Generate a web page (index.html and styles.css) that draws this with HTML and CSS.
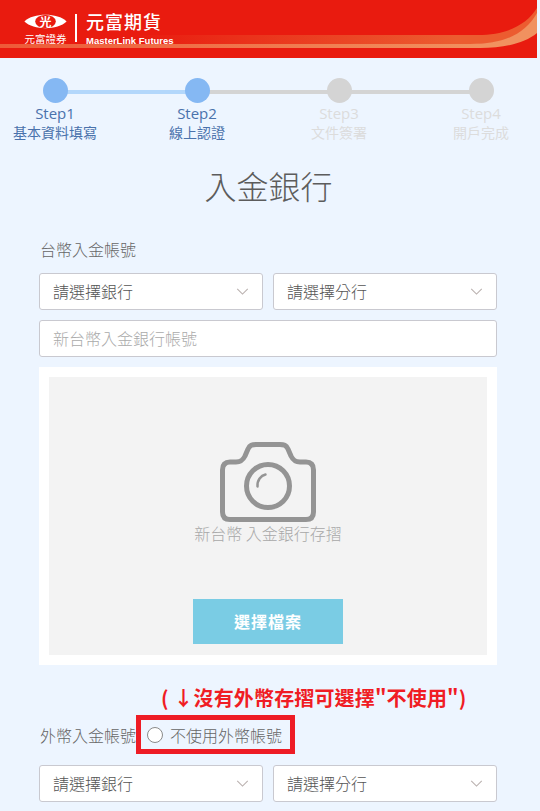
FILE: index.html
```html
<!DOCTYPE html>
<html lang="zh-Hant">
<head>
<meta charset="utf-8">
<title>入金銀行</title>
<link rel="stylesheet" href="styles.css">
</head>
<body>
<div class="page">
  <header class="header">
    <svg class="swoosh" viewBox="0 0 537 58" preserveAspectRatio="none" aria-hidden="true">
      <defs>
        <linearGradient id="bandDark" gradientUnits="userSpaceOnUse" x1="0" y1="0" x2="537" y2="0">
          <stop offset="0.25" stop-color="#e91b0f"/>
          <stop offset="0.85" stop-color="#ec5c30"/>
        </linearGradient>
        <linearGradient id="bandLight" gradientUnits="userSpaceOnUse" x1="0" y1="0" x2="537" y2="0">
          <stop offset="0" stop-color="#ee5a38"/>
          <stop offset="0.9" stop-color="#f1915f"/>
        </linearGradient>
      </defs>
      <path d="M0 35 H478 C508 35 527 24 537 8 V20 C525 36 505 44 470 44 H0 Z" fill="url(#bandDark)"/>
      <path d="M0 44 H470 C505 44 525 34 537 13 V33 C525 43 505 48 480 48 H0 Z" fill="url(#bandLight)"/>
    </svg>
    <div class="brand">
      <div class="mark">
        <svg class="oval" viewBox="0 0 46 16" aria-hidden="true">
          <path d="M0.5 8 C10 -1.5 36 -1.5 45.5 8 C36 17.5 10 17.5 0.5 8 Z" fill="#fff"/>
          <ellipse cx="23" cy="8" rx="11" ry="7" fill="#e91b0f"/>
        </svg>
        <span class="oval-char">光</span>
        <span class="mark-name">元富證券</span>
      </div>
      <div class="divider"></div>
      <div class="brand-text">
        <span class="brand-zh">元富期貨</span>
        <span class="brand-en">MasterLink Futures</span>
      </div>
    </div>
  </header>

  <ol class="steps">
    <li class="step done"><span class="dot"></span><span class="step-no">Step1</span><span class="step-name">基本資料填寫</span></li>
    <li class="step active"><span class="dot"></span><span class="step-no">Step2</span><span class="step-name">線上認證</span></li>
    <li class="step"><span class="dot"></span><span class="step-no">Step3</span><span class="step-name">文件簽署</span></li>
    <li class="step last"><span class="dot"></span><span class="step-no">Step4</span><span class="step-name">開戶完成</span></li>
  </ol>

  <h1 class="title">入金銀行</h1>

  <main class="form">
    <div class="field-label">台幣入金帳號</div>
    <div class="select-row">
      <div class="select">請選擇銀行<svg class="chev" viewBox="0 0 14 8"><path d="M1 1l6 6 6-6"/></svg></div>
      <div class="select">請選擇分行<svg class="chev" viewBox="0 0 14 8"><path d="M1 1l6 6 6-6"/></svg></div>
    </div>
    <div class="input">新台幣入金銀行帳號</div>
    <div class="upload">
      <div class="upload-inner">
        <svg class="camera" viewBox="0 0 96 80" aria-hidden="true">
          <path d="M10 20 H16 C21 20 23 18 25 14 L28 7 C30 3 32 2.500 36 2.500 H60 C64 2.500 66 3 68 7 L71 14 C73 18 75 20 80 20 H86 C91 20 93.500 23 93.500 28 V70 C93.500 75 91 77.500 86 77.500 H10 C5 77.500 2.500 75 2.500 70 V28 C2.500 23 5 20 10 20 Z"/>
          <circle cx="48" cy="44" r="21.500"/>
          <path class="glint" d="M37.500 44.500 C37 38 41 33.500 45.500 32.500"/>
        </svg>
        <div class="upload-text">新台幣 入金銀行存摺</div>
        <div class="upload-btn">選擇檔案</div>
      </div>
    </div>
    <div class="note">( ↓沒有外幣存摺可選擇"不使用")</div>
    <div class="foreign">
      <span class="foreign-label">外幣入金帳號</span>
      <label class="opt"><span class="radio"></span>不使用外幣帳號</label>
    </div>
    <div class="select-row">
      <div class="select">請選擇銀行<svg class="chev" viewBox="0 0 14 8"><path d="M1 1l6 6 6-6"/></svg></div>
      <div class="select">請選擇分行<svg class="chev" viewBox="0 0 14 8"><path d="M1 1l6 6 6-6"/></svg></div>
    </div>
  </main>
</div>
</body>
</html>
```

FILE: styles.css
```css
* { box-sizing: border-box; }
html, body { margin: 0; padding: 0; background: #edf5ff; }
body {
  font-family: "Noto Sans CJK TC", "Noto Sans", sans-serif;
  color: #555;
  height: 811px;
  overflow: hidden;
}
.page { width: 537px; }

.header {
  position: relative;
  height: 58px;
  background: #e91b0f;
  overflow: hidden;
}
.swoosh { position: absolute; inset: 0; width: 100%; height: 100%; }
.brand {
  position: relative;
  display: flex;
  align-items: flex-start;
  padding: 14px 0 0 23px;
  color: #fff;
}
.mark { position: relative; width: 45px; display: flex; flex-direction: column; align-items: center; }
.oval { width: 45px; height: 15px; display: block; }
.oval-char {
  position: absolute;
  top: 0; left: 0; right: 0;
  text-align: center;
  font-size: 12px;
  line-height: 15px;
  font-weight: 700;
  color: #fff;
}
.mark-name { font-size: 10.5px; line-height: 12px; margin-top: 4px; white-space: nowrap; }
.divider { width: 2px; height: 28px; background: #fff; margin: 0 9px 0 7px; }
.brand-text { display: flex; flex-direction: column; margin-top: -3px; }
.brand-zh { font-size: 18px; line-height: 21px; letter-spacing: 1px; font-weight: 500; white-space: nowrap; }
.brand-en { font-family: "Liberation Sans", sans-serif; font-size: 9.5px; line-height: 12px; margin-top: 3px; font-weight: 700; white-space: nowrap; }

.steps {
  list-style: none;
  display: grid;
  grid-template-columns: repeat(4, 142px);
  margin: 20px 0 0 -16px;
  padding: 0;
}
.step {
  position: relative;
  display: flex;
  flex-direction: column;
  align-items: center;
  color: #dcdcdc;
}
.step::after {
  content: "";
  position: absolute;
  top: 12px;
  left: 50%;
  width: 100%;
  height: 4px;
  background: #d4d4d4;
}
.step.done::after { background: #b3d7fb; }
.step.last::after { display: none; }
.dot {
  position: relative;
  z-index: 1;
  width: 25px;
  height: 25px;
  border-radius: 50%;
  background: #d4d4d4;
}
.done .dot, .active .dot { background: #85b8f3; }
.done, .active { color: #4a72ac; }
.step-no { font-family: "Open Sans", sans-serif; font-size: 15px; line-height: 20px; margin-top: 0; }
.step-name { font-size: 14px; line-height: 20px; margin-top: -1px; white-space: nowrap; }

.title {
  margin: 20px 0 0;
  text-align: center;
  font-size: 32px;
  font-weight: 300;
  line-height: 46px;
  color: #5c5c5c;
  letter-spacing: 0;
}

.form { padding: 0 40px 0 39px; margin-top: 29px; }
.field-label { font-size: 16px; font-weight: 300; line-height: 24px; padding-left: 1px; color: #666; }
.select-row { display: grid; grid-template-columns: 224px 224px; gap: 10px; margin-top: 12px; }
.select, .input {
  height: 37px;
  background: #fff;
  border: 1px solid #c9c9d0;
  border-radius: 3px;
  font-size: 16px;
  font-weight: 300;
  line-height: 35px;
  padding-left: 13px;
}
.select { position: relative; color: #555; }
.chev {
  position: absolute;
  right: 13px;
  top: 14px;
  width: 13px;
  height: 7px;
  fill: none;
  stroke: #b9b0ae;
  stroke-width: 1.2;
}
.input { margin-top: 10px; color: #aaa; }

.upload { margin-top: 10px; background: #fff; padding: 10px; height: 298px; }
.upload-inner {
  height: 278px;
  background: #f3f3f3;
  display: flex;
  flex-direction: column;
  align-items: center;
  padding-top: 65px;
}
.camera { width: 96px; height: 80px; fill: none; stroke: #949494; stroke-width: 5; display: block; filter: blur(0.4px); }
.glint { stroke-width: 2.500; stroke-linecap: round; }
.upload-text { font-size: 16px; font-weight: 300; line-height: 22px; color: #a8a8a8; }
.upload-btn {
  width: 150px;
  height: 45px;
  margin-top: 55px;
  background: #7accE4;
  color: #fff;
  font-size: 16px;
  font-weight: 700;
  line-height: 45px;
  text-align: center;
  letter-spacing: 1px;
}

.note {
  margin: 19px 0 0 122px;
  color: #f01c24;
  font-size: 20px;
  font-weight: 700;
  line-height: 28px;
  letter-spacing: 0.15px;
  white-space: nowrap;
}
.foreign { display: flex; align-items: center; margin-top: 3px; height: 39px; padding-left: 1px; }
.foreign-label { font-size: 16px; font-weight: 300; color: #666; width: 96px; white-space: nowrap; }
.opt {
  display: flex;
  align-items: center;
  width: 159px;
  height: 39px;
  border: 5px solid #ee1c25;
  padding-left: 6px;
  font-size: 16px;
  font-weight: 300;
  color: #666;
  white-space: nowrap;
}
.radio {
  width: 16px;
  height: 16px;
  border: 1.5px solid #8a8a8a;
  border-radius: 50%;
  background: #fff;
  margin-right: 7px;
}
.foreign + .select-row { margin-top: 11px; }
```
